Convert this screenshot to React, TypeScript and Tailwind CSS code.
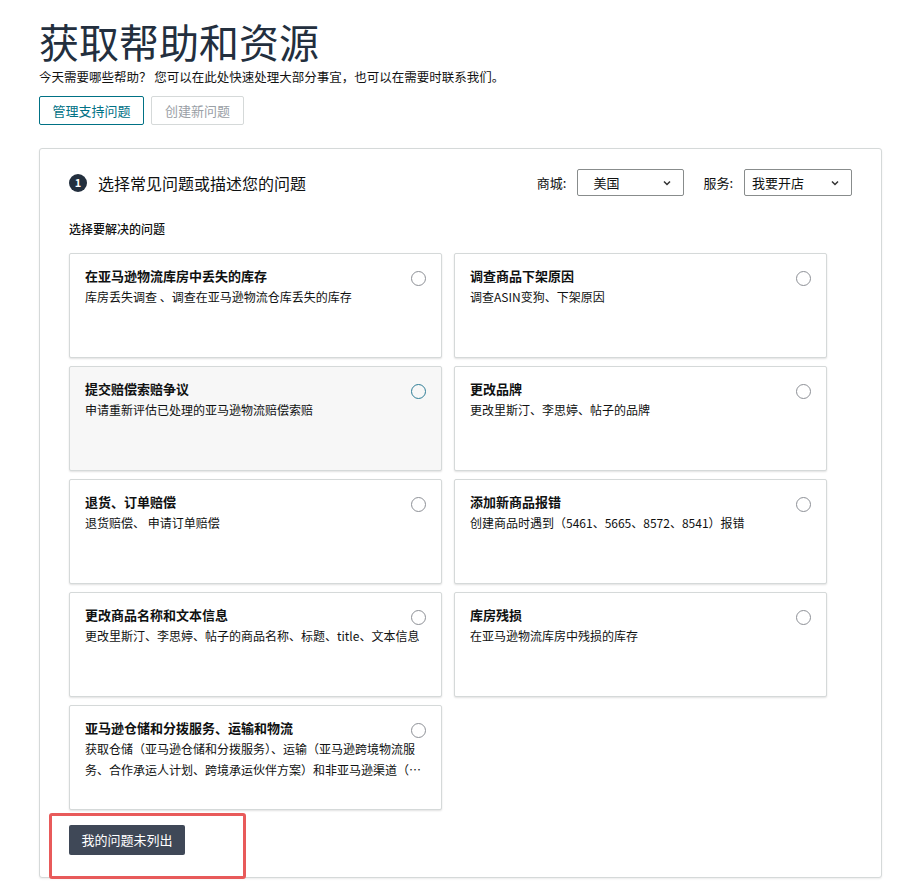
import React from 'react'

const issues = [
  { title: '在亚马逊物流库房中丢失的库存', desc: '库房丢失调查 、调查在亚马逊物流仓库丢失的库存' },
  { title: '调查商品下架原因', desc: '调查ASIN变狗、下架原因' },
  { title: '提交赔偿索赔争议', desc: '申请重新评估已处理的亚马逊物流赔偿索赔', hover: true },
  { title: '更改品牌', desc: '更改里斯汀、李思婷、帖子的品牌' },
  { title: '退货、订单赔偿', desc: '退货赔偿、 申请订单赔偿' },
  { title: '添加新商品报错', desc: '创建商品时遇到（5461、5665、8572、8541）报错' },
  { title: '更改商品名称和文本信息', desc: '更改里斯汀、李思婷、帖子的商品名称、标题、title、文本信息' },
  { title: '库房残损', desc: '在亚马逊物流库房中残损的库存' },
  {
    title: '亚马逊仓储和分拨服务、运输和物流',
    desc: '获取仓储（亚马逊仓储和分拨服务）、运输（亚马逊跨境物流服务、合作承运人计划、跨境承运伙伴方案）和非亚马逊渠道（多渠道配送）的支持',
  },
]

const Chevron = () => (
  <svg width="12" height="12" viewBox="0 0 12 12" fill="none" stroke="#333" strokeWidth="1.5">
    <path d="M3 4.5 6 7.5 9 4.5" />
  </svg>
)

const App: React.FC = () => {
  return (
    <div
      className="min-h-[892px] bg-white px-[39px] pt-[16px] text-[#0f1111]"
      style={{ fontFamily: '"Noto Sans CJK SC", "Noto Sans", sans-serif' }}
    >
      <h1 className="text-[40px] leading-[50px] text-[#232f3e]">获取帮助和资源</h1>
      <p className="mt-[2px] text-[12.5px] leading-[18px] text-[#111]">
        今天需要哪些帮助？ 您可以在此处快速处理大部分事宜，也可以在需要时联系我们。
      </p>
      <div className="mt-[10px] flex gap-[7px]">
        <button className="h-[29px] w-[105px] rounded-[2px] border border-[#007185] text-[13px] text-[#007185]">
          管理支持问题
        </button>
        <button className="h-[29px] w-[93px] rounded-[2px] border border-[#d5d9d9] text-[13px] text-[#9aa0a6]">
          创建新问题
        </button>
      </div>

      <div className="relative mt-[23px] w-[843px] rounded-[3px] border border-[#d5d9d9] bg-white pb-[22px] pl-[29px] pr-[29px] pt-[20px] shadow-[0_1px_2px_rgba(0,0,0,0.08)]">
        <div className="flex items-center justify-between">
          <div className="flex items-center gap-[11px]">
            <span className="flex h-[18px] w-[18px] items-center justify-center rounded-full bg-[#232f3e] text-[11px] font-bold text-white">
              1
            </span>
            <span className="text-[16px] text-[#0f1111]">选择常见问题或描述您的问题</span>
          </div>
          <div className="flex items-center text-[13px]">
            <span className="mr-[11px]">商城:</span>
            <div className="flex h-[27px] w-[107px] items-center justify-between rounded-[2px] border border-[#888c8c] pl-[15px] pr-[10px]">
              <span>美国</span>
              <Chevron />
            </div>
            <span className="ml-[19px] mr-[11px]">服务:</span>
            <div className="flex h-[27px] w-[108px] items-center justify-between rounded-[2px] border border-[#888c8c] pl-[7px] pr-[10px]">
              <span>我要开店</span>
              <Chevron />
            </div>
          </div>
        </div>

        <div className="mt-[24px] text-[12px] font-medium leading-[18px]">选择要解决的问题</div>

        <div className="mt-[15px] grid w-[758px] grid-cols-2 gap-x-[12px] gap-y-[8px]">
          {issues.map((it) => (
            <div
              key={it.title}
              className={`h-[105px] rounded-[2px] border border-[#d5d9d9] pl-[15px] pr-[8px] pt-[12px] shadow-[0_1px_2px_rgba(0,0,0,0.12)] ${
                it.hover ? 'bg-[#f7f7f7]' : 'bg-white'
              }`}
            >
              <div className="flex items-start justify-between pr-[7px]">
                <div className="text-[13px] font-bold leading-[20px] text-[#0f1111]">{it.title}</div>
                <span
                  className={`mt-[5px] h-[15px] w-[15px] shrink-0 rounded-full border-[1.5px] ${
                    it.hover ? 'border-[#2e7d96]' : 'border-[#8d9096]'
                  }`}
                />
              </div>
              <div className="line-clamp-2 text-[12px] leading-[21px] text-[#0f1111]">{it.desc}</div>
            </div>
          ))}
        </div>

        <button className="mt-[15px] h-[30px] w-[116px] rounded-[2px] bg-[#3f4857] text-[13px] text-white">
          我的问题未列出
        </button>

        <div className="pointer-events-none absolute bottom-[-2px] left-[9px] h-[66px] w-[197px] rounded-[3px] border-[3px] border-[#e85a5a]" />
      </div>
    </div>
  )
}

export default App
